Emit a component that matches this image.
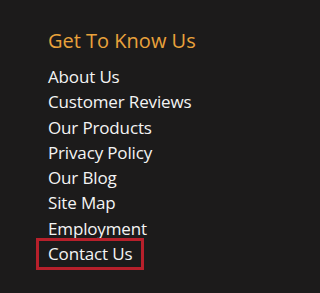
export default function App() {
  const items = [
    "About Us",
    "Customer Reviews",
    "Our Products",
    "Privacy Policy",
    "Our Blog",
    "Site Map",
    "Employment",
  ];
  return (
    <div
      className="w-full min-w-[241px] h-[293px] bg-[#1c1b1b] pl-[48px] pt-[27px] overflow-hidden"
      style={{ fontFamily: '"Open Sans", "Noto Sans", sans-serif' }}
    >
      <h2 className="text-[20px] leading-[28px] text-[#e9a23b] font-normal">Get To Know Us</h2>
      <ul className="mt-[9px] text-[17px] leading-[25.3px] text-[#f4f4f4] tracking-[-0.15px]">
        {items.map((t) => (
          <li key={t}>{t}</li>
        ))}
        <li>
          <span className="relative">
            Contact Us
            <span className="absolute left-[-12px] right-[-12px] top-[-4px] bottom-[-5px] border-[3px] border-[#b7202b]"></span>
          </span>
        </li>
      </ul>
    </div>
  );
}
